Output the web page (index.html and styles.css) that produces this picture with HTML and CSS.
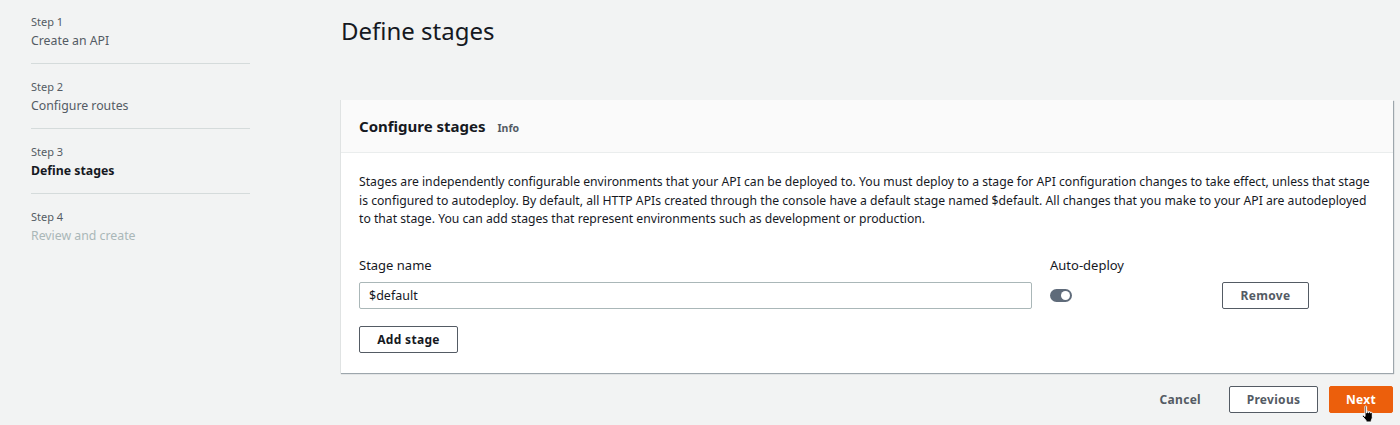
FILE: index.html
```html
<!DOCTYPE html>
<html>
<head>
<meta charset="utf-8">
<link rel="stylesheet" href="styles.css">
</head>
<body>
<div class="page">
  <nav class="steps">
    <div class="step">
      <div class="step-num">Step 1</div>
      <div class="step-title">Create an API</div>
    </div>
    <div class="step">
      <div class="step-num">Step 2</div>
      <div class="step-title">Configure routes</div>
    </div>
    <div class="step">
      <div class="step-num">Step 3</div>
      <div class="step-title active">Define stages</div>
    </div>
    <div class="step last">
      <div class="step-num">Step 4</div>
      <div class="step-title disabled">Review and create</div>
    </div>
  </nav>
  <main class="main">
    <h1 class="title">Define stages</h1>
    <section class="card">
      <header class="card-head">
        <h2>Configure stages</h2>
        <span class="info">Info</span>
      </header>
      <div class="card-body">
        <p class="desc">Stages are independently configurable environments that your API can be deployed to. You must deploy to a stage for API configuration changes to take effect, unless that stage is configured to autodeploy. By default, all HTTP APIs created through the console have a default stage named $default. All changes that you make to your API are autodeployed to that stage. You can add stages that represent environments such as development or production.</p>
        <div class="grid">
          <label class="lbl">Stage name</label>
          <label class="lbl">Auto-deploy</label>
          <span></span>
          <div class="input">$default</div>
          <div class="toggle-cell"><span class="toggle"><span class="knob"></span></span></div>
          <div class="remove-cell"><button class="btn">Remove</button></div>
        </div>
        <button class="btn add">Add stage</button>
      </div>
    </section>
    <div class="actions">
      <button class="link-btn">Cancel</button>
      <button class="btn prev">Previous</button>
      <button class="btn primary">Next
        <svg class="cursor" width="14" height="18" viewBox="0 0 14 18"><path d="M4 1.5c0-.8 1.6-.8 1.6 0V8l.4-.1V6.6c0-.8 1.5-.8 1.5 0v1.3l.4-.1v-.7c0-.8 1.5-.8 1.5 0v.9l.4-.1c0-.7 1.5-.7 1.5.1v4.5c0 1.2-.5 2-1 2.8v1.7H5v-1.5L1.5 11.5c-.6-.8.4-1.800 1.2-1.1L4 11.5z" fill="#000" stroke="#fff" stroke-width="1"/></svg>
      </button>
    </div>
  </main>
</div>
</body>
</html>
```
FILE: styles.css
```css
* { box-sizing: border-box; }
html, body { margin: 0; padding: 0; }
body {
  background: #f2f3f3;
  font-family: "Noto Sans", "Open Sans", sans-serif;
  color: #16191f;
  width: 1400px;
  height: 425px;
  overflow: hidden;
}
.page {
  display: flex;
  padding-left: 31px;
}
.steps {
  width: 219px;
  padding-top: 14px;
  flex: none;
}
.step {
  border-bottom: 1px solid #d5dbdb;
  padding-bottom: 11px;
  margin-bottom: 15px;
}
.step.last { border-bottom: none; }
.step-num {
  font-size: 11px;
  line-height: 16px;
  color: #545b64;
}
.step-title {
  font-size: 12.3px;
  line-height: 22px;
  color: #545b64;
}
.step-title.active { color: #16191f; font-weight: 700; }
.step-title.disabled { color: #aab7b8; }
.main {
  margin-left: 90px;
  width: 1053px;
  flex: none;
}
.title {
  margin: 14px 0 0 1px;
  font-size: 24px;
  font-weight: 400;
  line-height: 34px;
  color: #16191f;
}
.card {
  margin-top: 52px;
  background: #fff;
  border-left: 1px solid #e0e3e3;
  box-shadow: 1px 1px 1px 0 rgba(0,22,40,0.35);
}
.card-head {
  height: 53px;
  background: #fafafa;
  border-bottom: 1px solid #eaeded;
  display: flex;
  align-items: center;
  padding: 0 18px;
}
.card-head h2 {
  margin: 0;
  font-size: 15px;
  font-weight: 700;
  color: #16191f;
}
.info {
  margin-left: 12px;
  font-size: 10.5px;
  font-weight: 700;
  color: #545b64;
  margin-top: 3px;
}
.card-body {
  padding: 20px 18px 20px;
}
.desc {
  margin: 0;
  font-size: 12.2px;
  line-height: 18.5px;
  color: #16191f;
}
.grid {
  margin-top: 26px;
  display: grid;
  grid-template-columns: 673px 154px 87px;
  column-gap: 18px;
  row-gap: 7px;
}
.lbl {
  font-size: 13px;
  line-height: 20px;
  color: #16191f;
}
.input {
  height: 27px;
  border: 1px solid #aab7b8;
  border-radius: 2px;
  font-size: 12.5px;
  line-height: 25px;
  padding: 0 9px;
}
.toggle-cell { display: flex; align-items: center; }
.toggle {
  width: 22px;
  height: 13px;
  background: #5f6b7a;
  border-radius: 7px;
  position: relative;
  display: inline-block;
}
.knob {
  position: absolute;
  right: 2px;
  top: 2px;
  width: 9px;
  height: 9px;
  border-radius: 50%;
  background: #fff;
}
.btn {
  font-family: inherit;
  font-size: 12px;
  font-weight: 700;
  letter-spacing: 0.3px;
  color: #545b64;
  background: #fff;
  border: 1px solid #545b64;
  border-radius: 2px;
  height: 27px;
  padding: 0 18px;
  cursor: pointer;
}
.remove-cell .btn { width: 87px; padding: 0; }
.add {
  margin-top: 17px;
  width: 99px;
  padding: 0;
  color: #16191f;
}
.actions {
  display: flex;
  justify-content: flex-end;
  align-items: center;
  margin-top: 13px;
  gap: 11px;
}
.link-btn {
  font-family: inherit;
  font-size: 12px;
  font-weight: 700;
  color: #545b64;
  background: none;
  border: none;
  margin-right: 11px;
  letter-spacing: 0.3px;
}
.prev { width: 89px; padding: 0; }
.primary {
  position: relative;
  width: 64px;
  padding: 0;
  background: #ec5f0c;
  border-color: #ec5f0c;
  color: #fff;
}
.cursor {
  position: absolute;
  left: 31px;
  top: 18px;
}
```
